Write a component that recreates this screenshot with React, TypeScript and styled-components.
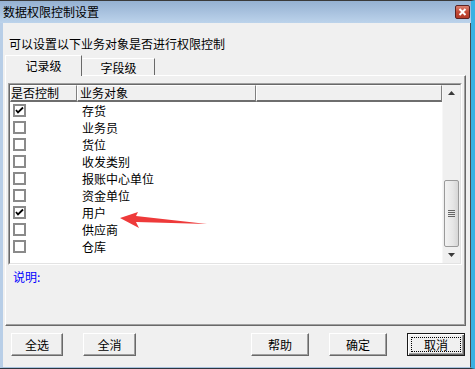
import React from 'react'
import styled, { createGlobalStyle } from 'styled-components';

const FONT = `'Noto Sans CJK SC', 'Noto Sans', sans-serif`;

const GlobalStyle = createGlobalStyle`
  html, body {
    margin: 0;
    padding: 0;
    background: #ffffff;
  }
  body {
    font-family: ${FONT};
    font-size: 12px;
    color: #000;
  }
`;

const Frame = styled.div`
  position: relative;
  width: 475px;
  height: 369px;
  box-sizing: border-box;
  display: flex;
  flex-direction: column;
  border-top: 1px solid #3a3a3a;
  border-right: 4px solid #3ab1e3;
  border-bottom: 1px solid #2c3640;
  background: #f0f0f0;
`;

const TitleBar = styled.div`
  height: 22px;
  display: flex;
  align-items: flex-start;
  justify-content: space-between;
  background: linear-gradient(#95b1d2, #bcd3eb);
`;

const Title = styled.div`
  padding: 3px 0 0 3px;
  line-height: 16px;
  font-size: 12px;
`;

const CloseButton = styled.div`
  width: 15px;
  height: 14px;
  margin: 4px 1px 0 0;
  box-sizing: border-box;
  border: 1px solid #5b2323;
  border-radius: 2px;
  background: linear-gradient(#dc8272, #c34a36 50%, #b33a28);
  display: flex;
  align-items: center;
  justify-content: center;
`;

const Client = styled.div`
  flex: 1;
  display: flex;
  flex-direction: column;
  border-left: 3px solid #b8cee7;
  border-right: 1px solid #4a4a4a;
  border-bottom: 1px solid #a9c3de;
`;

const Prompt = styled.div`
  margin-top: 14px;
  padding-left: 6px;
  line-height: 14px;
  height: 14px;
`;

const TabRow = styled.div`
  margin: 4px 0 0 2px;
  height: 20px;
  display: flex;
  align-items: flex-end;
  position: relative;
  z-index: 1;
`;

const Tab = styled.div<{ $active?: boolean; $w: number }>`
  width: ${p => p.$w}px;
  height: ${p => (p.$active ? 21 : 17)}px;
  margin-bottom: ${p => (p.$active ? -1 : 0)}px;
  box-sizing: border-box;
  border-top: 1px solid #ffffff;
  border-left: 1px solid ${p => (p.$active ? '#ffffff' : '#f0f0f0')};
  border-right: 1px solid #696969;
  background: #f0f0f0;
  display: flex;
  justify-content: center;
  padding-top: ${p => (p.$active ? 3 : 2)}px;
  line-height: 14px;
`;

const TabPanel = styled.div`
  margin-left: 2px;
  width: 461px;
  height: 251px;
  box-sizing: border-box;
  border-top: 1px solid #ffffff;
  border-left: 1px solid #ffffff;
  border-right: 1px solid #696969;
  border-bottom: 1px solid #696969;
  box-shadow: inset -1px -1px 0 #a0a0a0;
  padding: 7px 0 0 2px;
`;

const ListOuter = styled.div`
  width: 454px;
  height: 182px;
  box-sizing: border-box;
  border: 1px solid;
  border-color: #a0a0a0 #ffffff #ffffff #a0a0a0;
`;

const ListInner = styled.div`
  height: 100%;
  box-sizing: border-box;
  border: 1px solid;
  border-color: #696969 #e3e3e3 #e3e3e3 #696969;
  background: #ffffff;
  display: flex;
`;

const Grid = styled.div`
  flex: 1;
  display: flex;
  flex-direction: column;
`;

const HeaderRow = styled.div`
  display: flex;
  height: 17px;
  background: #f0f0f0;
`;

const HeaderCell = styled.div<{ $w?: number; $pad: number }>`
  ${p => (p.$w ? `width: ${p.$w}px;` : 'flex: 1;')}
  box-sizing: border-box;
  border-top: 1px solid #ffffff;
  border-left: 1px solid #ffffff;
  border-right: 1px solid #808080;
  border-bottom: 2px solid #6e6e6e;
  padding-left: ${p => p.$pad}px;
  line-height: 14px;
`;

const Row = styled.div`
  display: flex;
  height: 17px;
  align-items: center;
`;

const CheckCell = styled.div`
  width: 67px;
  padding-left: 3px;
  box-sizing: border-box;
  display: flex;
  align-items: center;
`;

const CheckBox = styled.div`
  width: 13px;
  height: 13px;
  box-sizing: border-box;
  border: 2px solid #8a8a8a;
  background: #ffffff;
  display: flex;
  align-items: center;
  justify-content: center;
`;

const NameCell = styled.div`
  padding-left: 5px;
  line-height: 14px;
`;

const ScrollBar = styled.div`
  width: 17px;
  display: flex;
  flex-direction: column;
  background: #f0f0f0;
  border-left: 1px solid #f7f7f7;
`;

const ArrowButton = styled.div`
  height: 17px;
  display: flex;
  align-items: center;
  justify-content: center;
`;

const Track = styled.div`
  flex: 1;
  padding: 0 1px;
`;

const Thumb = styled.div`
  margin-top: 78px;
  height: 67px;
  box-sizing: border-box;
  border: 1px solid #9a9a9a;
  border-radius: 2px;
  background: linear-gradient(90deg, #f2f2f2, #e6e6e6 60%, #d6d6d6);
  display: flex;
  align-items: center;
  justify-content: center;
`;

const Note = styled.div`
  margin-top: 5px;
  padding-left: 5px;
  line-height: 14px;
  color: #0000ff;
`;

const ButtonRow = styled.div`
  margin-top: 7px;
  padding: 0 5px 0 8px;
  display: flex;
  gap: 20px;
`;

const Spacer = styled.div`
  flex: 1;
`;

const Button = styled.div<{ $w: number; $default?: boolean }>`
  width: ${p => p.$w}px;
  height: 23px;
  box-sizing: border-box;
  border: 1px solid;
  border-color: ${p => (p.$default ? '#1a1a1a' : '#ffffff #696969 #696969 #ffffff')};
  box-shadow: ${p =>
    p.$default
      ? 'inset 1px 1px 0 #ffffff, inset -1px -1px 0 #696969, inset -2px -2px 0 #a0a0a0'
      : 'inset -1px -1px 0 #a0a0a0'};
  background: #f0f0f0;
  display: flex;
  align-items: center;
  justify-content: center;
  padding: 3px;
`;

const FocusRing = styled.div`
  flex: 1;
  align-self: stretch;
  border: 1px dotted #000;
  display: flex;
  align-items: center;
  justify-content: center;
`;

const Arrow = styled.svg`
  position: absolute;
  left: 115px;
  top: 205px;
`;

const items: [string, boolean][] = [
  ['存货', true],
  ['业务员', false],
  ['货位', false],
  ['收发类别', false],
  ['报账中心单位', false],
  ['资金单位', false],
  ['用户', true],
  ['供应商', false],
  ['仓库', false],
];

function Check() {
  return (
    <svg width="9" height="9" viewBox="0 0 9 9">
      <path d="M1 4 L3 6.5 L8 1.5" stroke="#000" strokeWidth="1.8" fill="none" />
    </svg>
  );
}

export default function App() {
  return (
    <>
      <GlobalStyle />
      <Frame>
        <TitleBar>
          <Title>数据权限控制设置</Title>
          <CloseButton>
            <svg width="9" height="8" viewBox="0 0 9 8">
              <path d="M1.5 1 L7.5 7 M7.5 1 L1.5 7" stroke="#ffffff" strokeWidth="2" />
            </svg>
          </CloseButton>
        </TitleBar>
        <Client>
          <Prompt>可以设置以下业务对象是否进行权限控制</Prompt>
          <TabRow>
            <Tab $active $w={77}>记录级</Tab>
            <Tab $w={73}>字段级</Tab>
          </TabRow>
          <TabPanel>
            <ListOuter>
              <ListInner>
                <Grid>
                  <HeaderRow>
                    <HeaderCell $w={67} $pad={0}>是否控制</HeaderCell>
                    <HeaderCell $w={179} $pad={2}>业务对象</HeaderCell>
                    <HeaderCell $pad={0} />
                  </HeaderRow>
                  {items.map(([name, checked]) => (
                    <Row key={name}>
                      <CheckCell>
                        <CheckBox>{checked && <Check />}</CheckBox>
                      </CheckCell>
                      <NameCell>{name}</NameCell>
                    </Row>
                  ))}
                </Grid>
                <ScrollBar>
                  <ArrowButton>
                    <svg width="7" height="4" viewBox="0 0 7 4">
                      <path d="M0 4 L3.5 0 L7 4 Z" fill="#3a3a3a" />
                    </svg>
                  </ArrowButton>
                  <Track>
                    <Thumb>
                      <svg width="7" height="8" viewBox="0 0 7 8">
                        <path d="M0 1.5 H7 M0 3.5 H7 M0 5.5 H7 M0 7.5 H7" stroke="#666" strokeWidth="1" />
                      </svg>
                    </Thumb>
                  </Track>
                  <ArrowButton>
                    <svg width="7" height="4" viewBox="0 0 7 4">
                      <path d="M0 0 L3.5 4 L7 0 Z" fill="#3a3a3a" />
                    </svg>
                  </ArrowButton>
                </ScrollBar>
              </ListInner>
            </ListOuter>
            <Note>说明:</Note>
          </TabPanel>
          <ButtonRow>
            <Button $w={52}>全选</Button>
            <Button $w={53}>全消</Button>
            <Spacer />
            <Button $w={58}>帮助</Button>
            <Button $w={58}>确定</Button>
            <Button $w={58} $default>
              <FocusRing>取消</FocusRing>
            </Button>
          </ButtonRow>
        </Client>
        <Arrow width="100" height="30" viewBox="0 0 100 30">
          <path d="M5 12 L23 6 L21 10 L92 18 L21 16 L24 22 Z" fill="#ee3a3a" />
        </Arrow>
      </Frame>
    </>
  );
}
